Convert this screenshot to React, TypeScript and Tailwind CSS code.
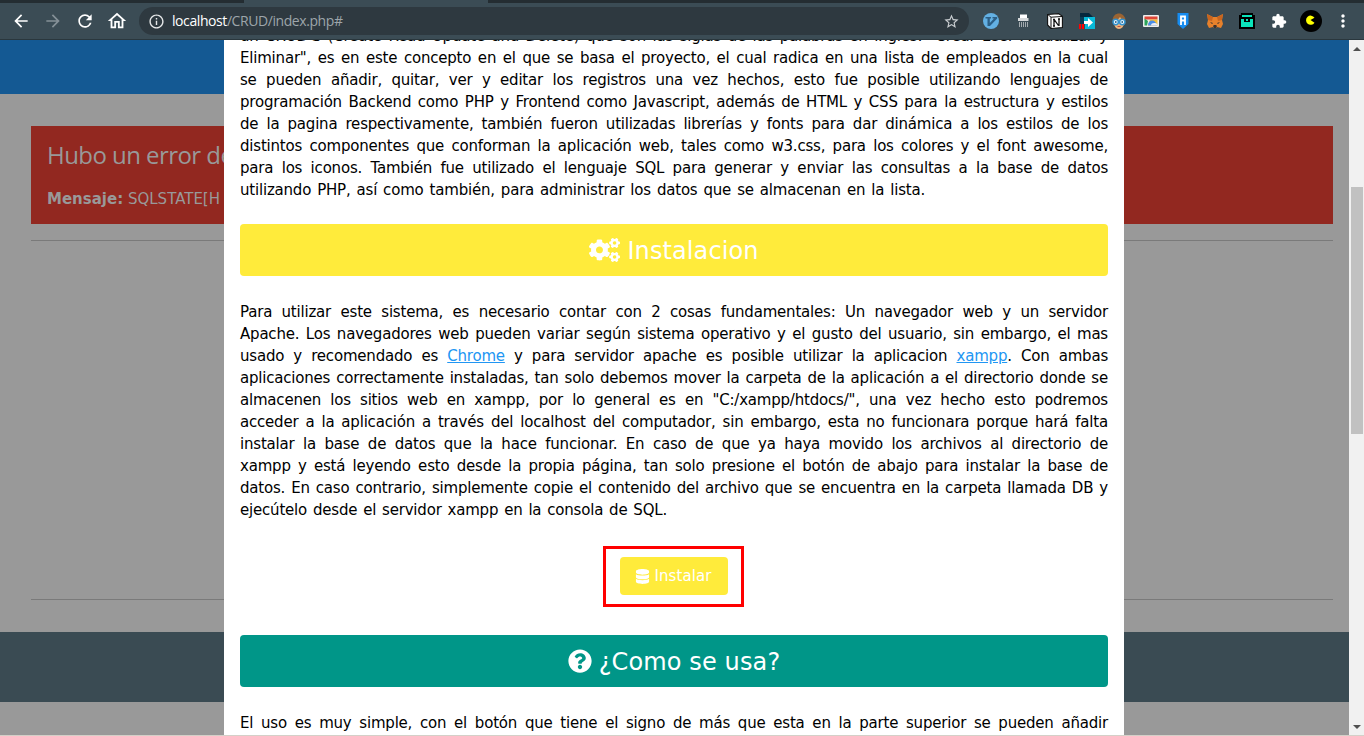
import React from 'react';
import { FaCogs, FaDatabase, FaQuestionCircle } from 'react-icons/fa';
import { MdArrowBack, MdArrowForward, MdRefresh, MdOutlineHome, MdOutlineInfo, MdStarBorder, MdExtension, MdMoreVert } from 'react-icons/md';

const intro = [
  'un CRUD\'S (Create Read Update and Delete) que son las siglas de las palabras en ingles: "Crear Leer Actualizar y',
  'Eliminar", es en este concepto en el que se basa el proyecto, el cual radica en una lista de empleados en la cual',
  'se pueden añadir, quitar, ver y editar los registros una vez hechos, esto fue posible utilizando lenguajes de',
  'programación Backend como PHP y Frontend como Javascript, además de HTML y CSS para la estructura y estilos',
  'de la pagina respectivamente, también fueron utilizadas librerías y fonts para dar dinámica a los estilos de los',
  'distintos componentes que conforman la aplicación web, tales como w3.css, para los colores y el font awesome,',
  'para los iconos. También fue utilizado el lenguaje SQL para generar y enviar las consultas a la base de datos',
  'utilizando PHP, así como también, para administrar los datos que se almacenan en la lista.',
];

const install: React.ReactNode[] = [
  'Para utilizar este sistema, es necesario contar con 2 cosas fundamentales: Un navegador web y un servidor',
  'Apache. Los navegadores web pueden variar según sistema operativo y el gusto del usuario, sin embargo, el mas',
  <>usado y recomendado es <a href="#" className="text-[#2196f3] underline">Chrome</a> y para servidor apache es posible utilizar la aplicacion <a href="#" className="text-[#2196f3] underline">xampp</a>. Con ambas</>,
  'aplicaciones correctamente instaladas, tan solo debemos mover la carpeta de la aplicación a el directorio donde se',
  'almacenen los sitios web en xampp, por lo general es en "C:/xampp/htdocs/", una vez hecho esto podremos',
  'acceder a la aplicación a través del localhost del computador, sin embargo, esta no funcionara porque hará falta',
  'instalar la base de datos que la hace funcionar. En caso de que ya haya movido los archivos al directorio de',
  'xampp y está leyendo esto desde la propia página, tan solo presione el botón de abajo para instalar la base de',
  'datos. En caso contrario, simplemente copie el contenido del archivo que se encuentra en la carpeta llamada DB y',
  'ejecútelo desde el servidor xampp en la consola de SQL.',
];

const usage = ['El uso es muy simple, con el botón que tiene el signo de más que esta en la parte superior se pueden añadir'];

function Lines({ lines, lastWidth }: { lines: React.ReactNode[]; lastWidth: string }) {
  return (
    <div className="text-[15px] leading-[22px] tracking-[-0.2px] text-black">
      {lines.map((line, i) => (
        <div
          key={i}
          className={`h-[22px] whitespace-nowrap text-justify [text-align-last:justify] ${i === lines.length - 1 ? lastWidth : 'w-[868px]'}`}
        >
          {line}
        </div>
      ))}
    </div>
  );
}

function Extensions() {
  return (
    <div className="flex items-center gap-4">
      <svg className="size-4" viewBox="0 0 16 16">
        <circle cx="8" cy="8" r="8" fill="#63b0e3" />
        <path d="M2.500 4H8v1.500H6.800V10L11 5.500H9.500V4h4.700v1.500L7 13H4.500V5.500h-2z" fill="#2c5f86" />
      </svg>
      <svg className="size-4" viewBox="0 0 16 16">
        <path d="M5 1.500h7V6H5z" fill="#fff" />
        <path d="M3 5h10.500v3H3z" fill="#d5d8da" />
        <path d="M4.500 9v5M6.500 9v5M8.500 9v5M10.500 9v5M12.500 9v5" stroke="#a4abaf" />
      </svg>
      <svg className="size-4" viewBox="0 0 16 16">
        <path d="M.6 1.500 11.500.6l3.900 2.700v11.200l-11.500 1L.6 12z" fill="#fff" stroke="#111" strokeWidth="1.100" />
        <path d="m1 1.700 3 2.500 11-.7M4 4.200v11" stroke="#111" fill="none" />
        <path d="M6 6.500h2M7 6.500V13M6 13h2M7.400 6.800l4 5.700M12 6v7M11 6h2" stroke="#111" strokeWidth="1.300" fill="none" />
      </svg>
      <svg className="size-4" viewBox="0 0 16 16">
        <path d="M1 0h9l4 4v2H1z" fill="#06283e" />
        <path d="M1 4h5v7H1z" fill="#0b3c55" />
        <path d="M5 4h11v12H6V11H5z" fill="#09b9d8" />
        <path d="M5 8h4V5l5 4.500-5 4.500v-3H5z" fill="#fff" />
        <path d="M0 11h2v5H0zM3 11h2v5H3z" fill="#f00" />
      </svg>
      <svg className="size-4" viewBox="0 0 16 16">
        <path d="M1.500 7C2 2.500 5 .5 8 .5S14 3 14.500 7l-1 4-2 3.500h-7L2.500 11z" fill="#9b6432" />
        <path d="M3 8c3-1 5-2 6-4 1 2 2.500 3 4.500 4-.5 5-2.500 8-5.500 8s-5-3-5-8z" fill="#eeb47c" />
        <circle cx="4.700" cy="9" r="2.700" fill="#e3f4fc" stroke="#3292cf" strokeWidth="1.500" />
        <circle cx="11.300" cy="9" r="2.700" fill="#e3f4fc" stroke="#3292cf" strokeWidth="1.500" />
        <path d="M4 9h1.500M10.500 9H12" stroke="#174a70" strokeWidth="1.500" />
        <path d="M6.500 13.500h3" stroke="#bd5145" />
      </svg>
      <svg className="size-4" viewBox="0 0 16 16">
        <rect y="2" width="16" height="12" rx="1" fill="#eee" />
        <path d="M1.500 3.500h13v3h-13z" fill="#df4638" />
        <path d="M1.500 5.500 5 8l-1 4.500H1.500z" fill="#2ca45a" />
        <path d="M7 6.500h7.500v6H5z" fill="#f5bf38" />
        <path d="M5 12.500c0-3 1.500-5 4-5s4.500 2 5 5z" fill="#4b8ee8" />
        <path d="M8 12.500c0-3 5-3 6.500-1v1z" fill="#e9eef8" />
      </svg>
      <svg className="size-4" viewBox="0 0 16 16">
        <path d="M2.500 0h11v11L8 16l-5.500-5z" fill="#168cf0" />
        <path d="M6 12V3.500h4V12M6 7.500h4" fill="none" stroke="#fff" strokeWidth="1.800" />
      </svg>
      <svg className="size-4" viewBox="0 0 16 16">
        <path d="m0 1 6 3h4l6-3-1 6 1 4-2 4-4-1-1 1H7l-1-1-4 1-2-4 1-4z" fill="#e7812b" />
        <path d="m0 1 6 3-1 4-4-1zM16 1l-6 3 1 4 4-1z" fill="#c8651f" />
        <path d="m3 9 3 1-1 1zM13 9l-3 1 1 1z" fill="#333" />
        <path d="m6 13 1-1h2l1 1-1 2H7z" fill="#3d332f" />
      </svg>
      <svg className="size-4" viewBox="0 0 16 16">
        <path d="M2 0h12v2h2v14H0V2h2z" fill="#000" />
        <path d="M3 2h10v2H3zM2 6h3v3h6V6h3v8H2zM7 6h2v2H7z" fill="#0be4bb" />
      </svg>
      <MdExtension className="size-4 text-white" />
    </div>
  );
}

function Toolbar() {
  return (
    <header className="h-10 shrink-0 border-b border-[#2a373d] bg-[#3b4c55]">
      <div className="flex h-[3px] bg-[#242d32]">
        <div className="w-[244px] rounded-br bg-[#242d32]" />
        <div className="w-[244px] bg-[#3b4c55]" />
      </div>
      <div className="flex h-9 items-center pl-[11px]">
        <MdArrowBack className="size-5 text-white" />
        <MdArrowForward className="ml-3 size-5 text-[#859097]" />
        <MdRefresh className="ml-3 size-5 text-white" />
        <MdOutlineHome className="ml-[11px] size-[22px] text-white" />
        <div className="ml-[11px] flex h-7 w-[830px] shrink-0 items-center rounded-full bg-[#2e3940] pr-[9px] pl-[9px]">
          <MdOutlineInfo className="size-[17px] text-[#e6e8e9]" />
          <span className="ml-[7px] grow font-['Open_Sans','Noto_Sans',sans-serif] text-[14px] leading-5 tracking-[-0.42px] text-[#9da5aa]">
            <span className="text-white">localhost</span>/CRUD/index.php#
          </span>
          <MdStarBorder className="size-[17px] text-[#c9cdd0]" />
        </div>
        <div className="ml-3.5">
          <Extensions />
        </div>
        <svg className="ml-[13px] size-[22px] shrink-0" viewBox="0 0 22 22">
          <circle cx="11" cy="11" r="11" fill="#000" />
          <path d="m10.500 10 4-2.300A4.600 4.600 0 1 0 14.500 12.700z" fill="#ff0" />
        </svg>
        <MdMoreVert className="ml-[11px] size-5 text-white" />
      </div>
    </header>
  );
}

function Backdrop() {
  return (
    <div className="flex h-full w-[1349px] flex-col bg-[#999]">
      <div className="h-[54px] shrink-0 bg-[#145993]" />
      <div className="mt-8 mr-4 ml-[31px] h-[98px] shrink-0 bg-[#922820] px-4 pt-[11px] whitespace-nowrap text-[#999]">
        <h3 className="font-['Open_Sans','Noto_Sans',sans-serif] text-[24px] leading-9 tracking-[-0.55px]">Hubo un error de</h3>
        <p className="mt-[15px] text-[15px] leading-[22px]"><b>Mensaje:</b> SQLSTATE[H</p>
      </div>
      <div className="mt-4 mr-4 ml-[31px] h-[360px] shrink-0 border-y border-[#7a7a7a]" />
      <div className="mt-8 h-[70px] shrink-0 bg-[#3a4b53]" />
    </div>
  );
}

export default function App() {
  return (
    <div className="flex h-[736px] w-[1364px] flex-col overflow-hidden bg-[#999] font-['DejaVu_Sans',Verdana,sans-serif]">
      <Toolbar />
      <div className="flex h-[695px] shrink-0">
        <main className="relative h-full w-[1349px] overflow-hidden">
          <Backdrop />
          <section className="absolute top-0 left-[224px] h-full w-[900px] overflow-hidden bg-white px-4">
            <div className="-mt-[15px]">
              <Lines lines={intro} lastWidth="w-[685px]" />
            </div>
            <h3 className="mt-[23px] flex h-[52px] items-center justify-center gap-[7px] rounded bg-[#ffeb3b] text-[24px] text-white">
              <FaCogs className="h-6 w-[31px]" preserveAspectRatio="none" />
              <span className="pt-0.5 tracking-[0.1px]">Instalacion</span>
            </h3>
            <div className="mt-[25px]">
              <Lines lines={install} lastWidth="w-[427px]" />
            </div>
            <div className="mt-[25px] ml-[363px] flex h-[61px] w-[141px] items-start justify-center border-3 border-[#f00] pt-2">
              <button className="flex h-[38px] w-[108px] items-center justify-center gap-1 rounded bg-[#ffeb3b] text-[15px] tracking-[0.1px] text-white">
                <FaDatabase className="h-[15px] w-[15px]" />
                <span className="pt-px">Instalar</span>
              </button>
            </div>
            <h3 className="mt-7 flex h-[52px] items-center justify-center gap-[7px] rounded bg-[#009688] text-[24px] text-white">
              <FaQuestionCircle className="size-6" />
              <span className="pt-0.5 tracking-[0.12px]">¿Como se usa?</span>
            </h3>
            <div className="mt-[25px]">
              <Lines lines={usage} lastWidth="w-[868px]" />
            </div>
          </section>
        </main>
        <aside className="flex w-[15px] flex-col items-center bg-[#f1f1f1]">
          <svg className="h-[17px] w-[15px]" viewBox="0 0 15 17"><path d="M4 11h8L8 7z" fill="#505050" /></svg>
          <div className="mt-[130px] ml-px h-[247px] w-3 bg-[#c1c1c1]" />
          <svg className="mt-auto h-[17px] w-[15px]" viewBox="0 0 15 17"><path d="M4 7h8l-4 4z" fill="#505050" /></svg>
        </aside>
      </div>
      <div className="h-px bg-[#d4d0c8]" />
    </div>
  );
}
